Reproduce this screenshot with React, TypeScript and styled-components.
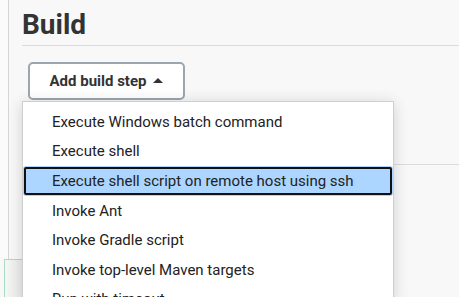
import styled, { createGlobalStyle } from "styled-components";

const GlobalStyle = createGlobalStyle`
  html, body {
    margin: 0;
    padding: 0;
    height: 100%;
    overflow: hidden;
    background: #f8f8f8;
  }
  #root {
    height: 100%;
  }
`;

const steps = [
  "Execute Windows batch command",
  "Execute shell",
  "Execute shell script on remote host using ssh",
  "Invoke Ant",
  "Invoke Gradle script",
  "Invoke top-level Maven targets",
  "Run with timeout",
];

const Page = styled.div`
  display: flex;
  flex-direction: column;
  height: 100%;
  font-family: Roboto, "Liberation Sans", sans-serif;
  color: #333;
`;

const Top = styled.div`
  display: flex;
  height: 259px;
  flex-shrink: 0;
`;

const Side = styled.div`
  width: 8px;
  flex-shrink: 0;
  background: #fbfbfb;
  border-right: 1px solid #d6d6d6;
`;

const Main = styled.div`
  flex: 1;
  padding-left: 13px;
`;

const Title = styled.h2`
  margin: 8px 0 0;
  padding-bottom: 3px;
  font-size: 28px;
  line-height: 34px;
  font-weight: 700;
  color: #333;
  border-bottom: 1px solid #dcdcdc;
`;

const ButtonWrap = styled.div`
  position: relative;
  display: inline-block;
  margin: 16px 0 0 6px;
  z-index: 2;
`;

const StepButton = styled.button`
  display: flex;
  align-items: center;
  justify-content: center;
  gap: 7px;
  width: 157px;
  height: 38px;
  padding: 0;
  background: #fff;
  border: 2px solid #9aa6b0;
  border-radius: 5px;
  font-family: inherit;
  font-size: 15px;
  font-weight: 700;
  color: #333;
`;

const Caret = styled.span`
  width: 0;
  height: 0;
  border-left: 5px solid transparent;
  border-right: 5px solid transparent;
  border-bottom: 5px solid #333;
  margin-top: -2px;
`;

const Menu = styled.ul`
  position: absolute;
  top: calc(100% + 1px);
  left: -6px;
  width: 370px;
  max-height: 196px;
  overflow: hidden;
  margin: 0;
  padding: 5px 0 0;
  list-style: none;
  background: #fff;
  border: 1px solid #cfcfcf;
  box-shadow: 0 2px 14px rgba(0, 0, 0, 0.16);
`;

const Item = styled.li<{ $active?: boolean }>`
  height: 29.6px;
  display: flex;
  align-items: center;
  padding-left: 29px;
  font-size: 15px;
  color: #222;
  white-space: nowrap;
  background: ${({ $active }) => ($active ? "#acd6ff" : "transparent")};
  border-radius: ${({ $active }) => ($active ? "3px" : "0")};
  outline: ${({ $active }) => ($active ? "2px solid #111" : "none")};
  outline-offset: -3px;
`;

const Divider = styled.div`
  margin-top: 64px;
  border-top: 1px solid #dcdcdc;
`;

const BottomBox = styled.div`
  flex: 1;
  width: 340px;
  margin-left: 4px;
  border: 1px solid #a9dcc3;
  border-bottom: none;
  background: linear-gradient(to right, #f4f6f4, #e9eae9 6%, #e9eae9);
`;

export default function App() {
  return (
    <Page>
      <GlobalStyle />
      <Top>
        <Side />
        <Main>
          <Title>Build</Title>
          <ButtonWrap>
            <StepButton>
              Add build step
              <Caret />
            </StepButton>
            <Menu>
              {steps.map((s, i) => (
                <Item key={s} $active={i === 2}>
                  {s}
                </Item>
              ))}
            </Menu>
          </ButtonWrap>
          <Divider />
        </Main>
      </Top>
      <BottomBox />
    </Page>
  );
}
